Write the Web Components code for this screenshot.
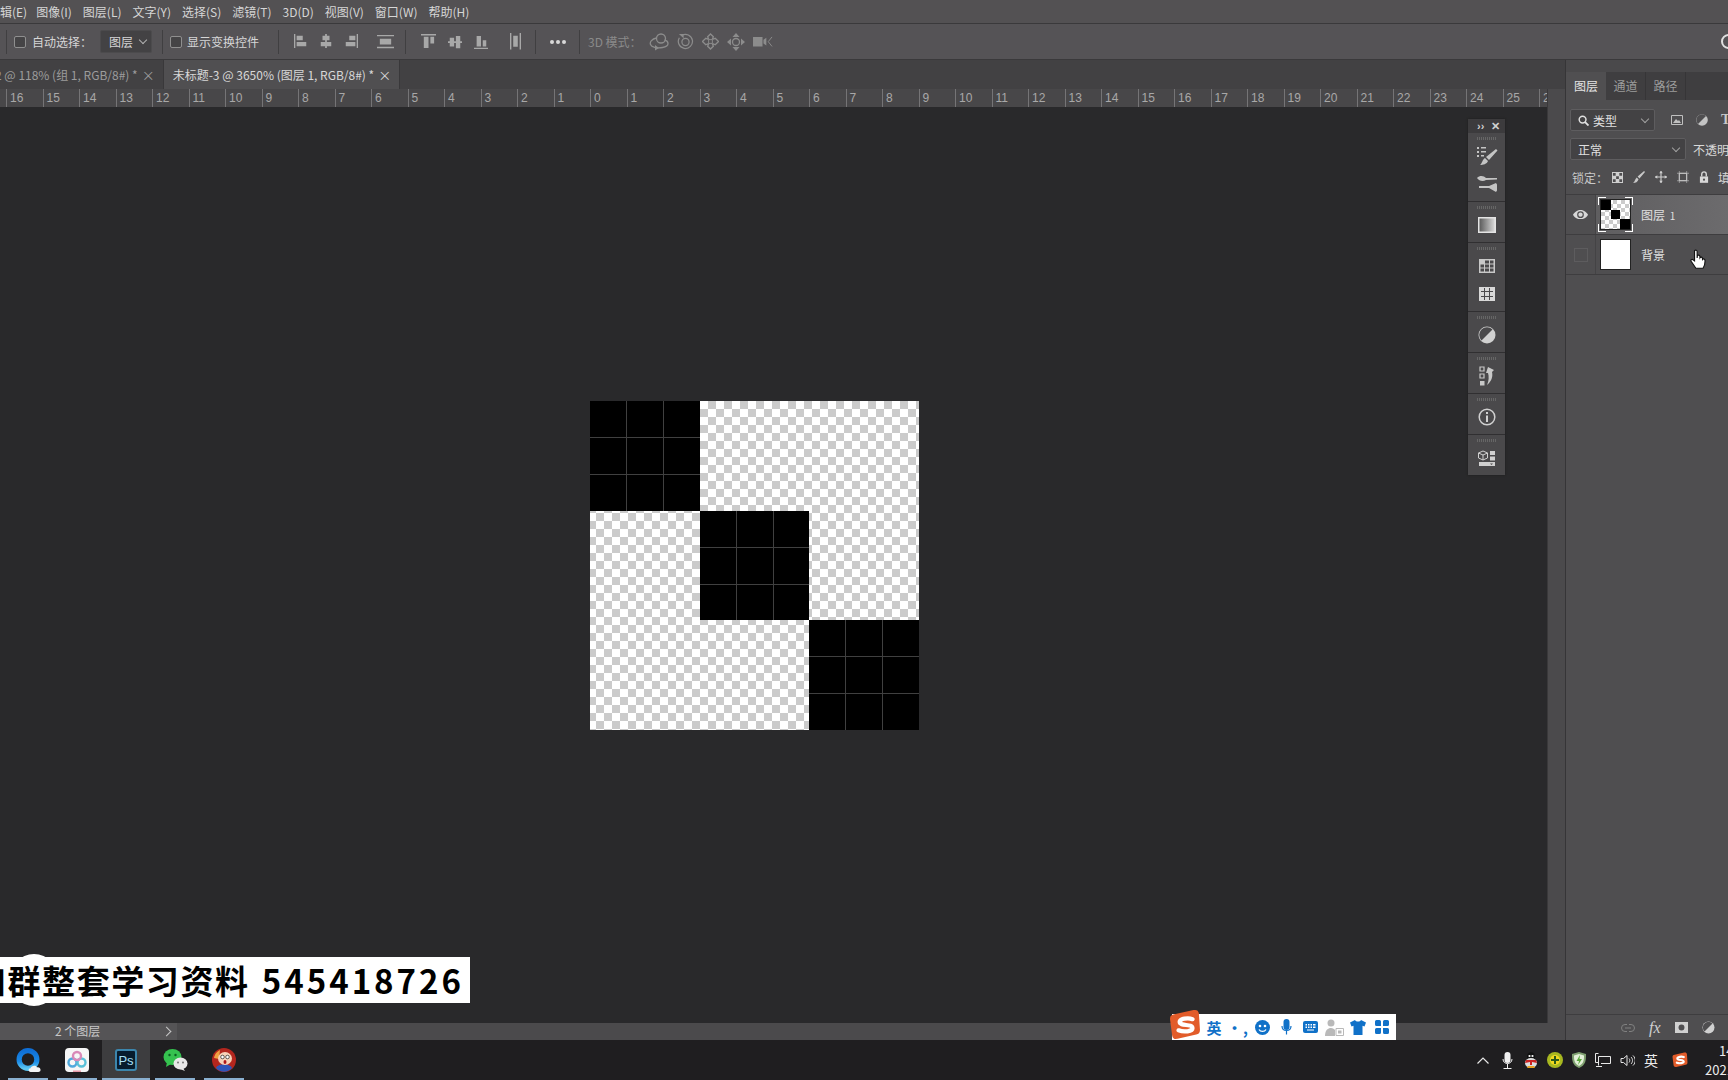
<!DOCTYPE html>
<html lang="zh">
<head>
<meta charset="utf-8">
<title>Photoshop</title>
<style>
  html, body { margin: 0; height: 100%; background: #29292b; overflow: hidden; }
  body { font: 12px "Noto Sans CJK SC", "Liberation Sans", sans-serif; color: #d0d0d0; }
</style>
</head>
<body>
<ps-app></ps-app>

<script>
// icon shapes, all on their own viewBox given as the first item
const SOGOU_S = '<path fill="#e25c2a" d="M5 5 23 1c3-.6 4.500.5 5 3l1 15c.2 3-1 4.500-3.500 5L8 28c-3 .5-4.500-.5-5-3L1 10c-.4-3 1-4.300 4-5z"/><path fill="none" stroke="#fff" stroke-width="4" stroke-linecap="round" d="M22 9.500c-4-1.500-12-.5-12 2.500 0 4.500 12 1.500 12 6 0 3-8 4-13 2"/>';
const ICONS = {
  alignL: ['16 16', '<path fill="#a8a8a8" d="M0 0h1.500v16H0zM3 2h7v5H3zM3 9h11v5H3z"/>'],
  alignC: ['16 16', '<path fill="#a8a8a8" d="M7 0h2v16H7zM4 2h8v5H4zM2 9h12v5H2z"/>'],
  alignR: ['16 16', '<path fill="#a8a8a8" d="M14.500 0H16v16h-1.500zM6 2h7v5H6zM2 9h11v5H2z"/>'],
  distV: ['18 16', '<path fill="#a8a8a8" d="M0 1h18v1.500H0zM0 13.500h18V15H0zM3 5h12v6H3z"/>'],
  alignT: ['16 16', '<path fill="#a8a8a8" d="M0 0h16v1.500H0zM3 3h5v12H3zM10 3h4v7h-4z"/>'],
  alignM: ['16 16', '<path fill="#a8a8a8" d="M0 7h16v2H0zM2 3h5v10H2zM9 1h5v14H9z"/>'],
  alignB: ['16 16', '<path fill="#a8a8a8" d="M0 14.500h16V16H0zM3 1h5v12H3zM10 6h4v7h-4z"/>'],
  distH: ['12 18', '<path fill="#a8a8a8" d="M0 0h1.500v18H0zM10.500 0H12v18h-1.500zM3.500 3h5v12h-5z"/>'],
  orbit: ['20 18', '<g fill="none" stroke="#8c8c8c" stroke-width="1.300"><circle cx="12" cy="5.500" r="4.500"/><path d="M7.500 5C3 6 .5 9 1.500 11.500c1 2.500 6 4 12 3 3-.5 5.500-2 5.500-4 0-1.500-1.500-3-3.500-3.500"/></g><path fill="#8c8c8c" d="M6 12l4 3-4 2.500z"/>'],
  roll: ['18 18', '<g fill="none" stroke="#8c8c8c" stroke-width="1.300"><path d="M5 2.500a7.500 7.500 0 1 1-2.500 2.500"/><circle cx="9" cy="9.500" r="3.800"/></g><path fill="#8c8c8c" d="M2 1h5v4.500z"/>'],
  pan: ['18 18', '<path fill="none" stroke="#8c8c8c" stroke-width="1.400" d="M9 1l3 3-1 2.500h1L14 5.500l3.500 3.500L14 12.500 12 11.500h-1l1 2.500-3 3-3-3 1-2.500H6L4 12.500.5 9 4 5.500 6 6.500h1L6 4z"/><path fill="none" stroke="#8c8c8c" d="M7 7h4v4H7z"/>'],
  slide: ['18 18', '<path fill="#8c8c8c" d="M9 0l3.500 4h-7zM9 18l-3.500-4h7zM0 9l4-3.500v7zM18 9l-4-3.500v7z"/><circle cx="9" cy="9" r="3.500" fill="none" stroke="#8c8c8c" stroke-width="1.300"/>'],
  video: ['21 14', '<path fill="#8c8c8c" d="M0 2h10v10H0zM11 5l3-2v8l-3-2z"/><path fill="none" stroke="#8c8c8c" d="M20 2l-4 5 4 5"/>'],
  brush: ['22 20', '<path fill="#c4c4c4" d="M1 1h2v2H1zM5 1h5v1.500H5zM1 5h2v2H1zM5 5h5v1.500H5zM1 9h2v2H1zM5 9h3v1.500H5zM20 3l1.500 1.500L13 14l-3-3zM9 12l3 3c-1 3-5 4-8 4 2-1 2-5 5-7z"/>'],
  brushSet: ['22 18', '<path fill="#c4c4c4" d="M1 3c3-3 7-2 9 0l11 0v1.500L10 5C7 7 3 6 1 3zM3 11h10l7-3 1 1.500v6L20 17l-7-4H3z"/>'],
  gradient: ['18 16', '<defs><linearGradient id="g"><stop offset="0" stop-color="#555"/><stop offset="1" stop-color="#ddd"/></linearGradient></defs><rect x=".75" y=".75" width="16.500" height="14.500" fill="url(#g)" stroke="#e4e4e4" stroke-width="1.500"/>'],
  table: ['16 14', '<path fill="#c8c8c8" d="M0 0h16v14H0z"/><path fill="#4a494b" d="M6 1.500h4v3H6zM11 1.500h3.500v3H11zM1.500 5.500h3.500v3H1.500zM6 5.500h4v3H6zM11 5.500h3.500v3H11zM1.500 9.500h3.500v3H1.500zM6 9.500h4v3H6zM11 9.500h3.500v3H11z"/>'],
  tableFill: ['16 14', '<path fill="#d8d8d8" d="M0 0h16v14H0z"/><path fill="none" stroke="#4a494b" d="M5.500 1v12M10.500 1v12M2 4.500h12M2 9.500h12"/>'],
  adjust: ['18 18', '<circle cx="9" cy="9" r="8.500" fill="#d0d0d0"/><path fill="#4a494b" d="M14.500 3.500 3.500 14.500A7 7 0 0 1 14.500 3.500z"/>'],
  history: ['16 20', '<path fill="none" stroke="#c8c8c8" stroke-width="1.200" d="M1 1h4v4H1zM1 8h4v4H1z"/><path fill="#c8c8c8" d="M1 15h4.500v4.500H1zM9 1l6 3-2 2c1 4 0 9-5 13 2-4 2-9 1-12l-2 0z"/>'],
  info: ['18 18', '<circle cx="9" cy="9" r="7.800" fill="none" stroke="#d0d0d0" stroke-width="1.500"/><path fill="#d0d0d0" d="M8 7.500h2V14H8zM8 4h2v2H8z"/>'],
  props: ['18 17', '<path fill="none" stroke="#d0d0d0" d="M5 1l4.500 2v5L5 10 .5 8V3zM.5 3 5 5l4.500-2M5 5v5"/><path fill="#d0d0d0" d="M12 1h5v4h-5zM12 6.500h5v4h-5zM1 12h16v4H1z"/><path fill="#4a494b" d="M12 13.500h3l-1.500 1.500z"/>'],
  eye: ['16 10', '<path fill="#d8d8d8" d="M8 0c4 0 7 3 8 5-1 2-4 5-8 5S1 7 0 5c1-2 4-5 8-5z"/><circle cx="8" cy="5" r="3.600" fill="#4f4e50"/><circle cx="8" cy="5" r="2.300" fill="#d8d8d8"/>'],
  search: ['12 12', '<circle cx="5" cy="5" r="3.700" fill="none" stroke="#e0e0e0" stroke-width="1.600"/><path stroke="#e0e0e0" stroke-width="2" d="M7.500 7.500 11.500 11.500"/>'],
  fImage: ['12 10', '<path fill="none" stroke="#c0c0c0" d="M.5.500h11v9H.5z"/><path fill="#c0c0c0" d="M2 8l3-4 2 2 1-1 2 3z"/>'],
  fAdjust: ['12 12', '<circle cx="6" cy="6" r="5.800" fill="#c4c4c4"/><path fill="#4f4e50" d="M10 2 2 10A5.500 5.500 0 0 1 10 2z"/>'],
  lockPx: ['12 12', '<path fill="#d0d0d0" d="M0 0h12v12H0z"/><path fill="#4f4e50" d="M1 1h3v3H1zM8 1h3v3H8zM4.500 4.500h3v3h-3zM1 8h3v3H1zM8 8h3v3H8z"/>'],
  lockBrush: ['13 13', '<path fill="#c8c8c8" d="M12 0l1 1-6 7-2-2zM4 7l2 2c-1 3-3 4-6 4 2-1 2-4 4-6z"/>'],
  lockMove: ['13 13', '<path fill="none" stroke="#d0d0d0" stroke-width="1.200" d="M6.500 0v13M0 6.500h13"/><path fill="#d0d0d0" d="M6.500 0l2 2.500h-4zM6.500 13l-2-2.500h4zM0 6.500l2.500-2v4zM13 6.500l-2.500-2v4z"/>'],
  lockArt: ['13 13', '<path fill="none" stroke="#d0d0d0" d="M2.500 2.500h8v8h-8z"/><path fill="#d0d0d0" d="M2 0h1v13H2zM10 0h1v13h-1zM0 2h13v1H0zM0 10h13v1H0z" opacity=".55"/>'],
  lock: ['11 13', '<path fill="none" stroke="#d8d8d8" stroke-width="1.500" d="M3 6V3.500a2.500 2.500 0 0 1 5 0V6"/><path fill="#d8d8d8" d="M1 6h9v7H1z"/><circle cx="5.500" cy="9.500" r="1.200" fill="#4f4e50"/>'],
  link: ['14 8', '<path fill="none" stroke="#808080" d="M6 .5H4a3.500 3.500 0 0 0 0 7h2M8 .5h2a3.500 3.500 0 0 1 0 7H8M4 4h6"/>'],
  mask: ['14 12', '<path fill="#d0d0d0" d="M0 0h14v12H0z"/><circle cx="7" cy="6" r="3.200" fill="#4f4e50"/>'],
  fill: ['13 13', '<circle cx="6.500" cy="6.500" r="6" fill="#d0d0d0"/><path fill="#4f4e50" d="M10.500 2.500l-8 8A5.500 5.500 0 0 1 10.500 2.500z"/>'],
  hand: ['15 18', '<path fill="#fff" stroke="#111" stroke-width="1" d="M4 1.500c1-1 2.300-.5 2.300.8V8l.2-2c.6-1 2-.8 2.200.3l.1 1.500c.5-.9 2-.8 2.200.4l.1 1c.6-.8 2-.5 2.100.6.200 2.500-.2 5-1.700 7.200H5.200L1 10.800c-.6-1 .6-2.200 1.700-1.300L4 10.500z"/>'],
  // taskbar
  qqb: ['24 24', '<defs><linearGradient id="q" x1="0" y1="0" x2="0" y2="1"><stop offset="0" stop-color="#0f6fd6"/><stop offset=".6" stop-color="#1a8ae6"/><stop offset="1" stop-color="#5cc6f2"/></linearGradient></defs><circle cx="11.500" cy="11" r="8.500" fill="none" stroke="url(#q)" stroke-width="5"/><path fill="#f4f4f4" d="M14 23c-2.500 0-2.500-3.500 0-3.500.5-2.500 5-3.500 6-1 2.500-.5 4 1.500 3.500 3.200-.3 1-1 1.300-2 1.300z"/>'],
  disk: ['24 24', '<rect width="24" height="24" rx="4" fill="#f6f6f6"/><g fill="none" stroke-width="2.400"><circle cx="7.500" cy="14.500" r="4" stroke="#4fa8dc"/><circle cx="16.500" cy="14.500" r="4" stroke="#58c0d8"/><circle cx="12" cy="8" r="4" stroke="#d989b8"/></g><path fill="#e89aa8" d="M8 22.500h8V24H8z"/>'],
  wechat: ['25 24', '<ellipse cx="9.500" cy="9" rx="9" ry="8" fill="#35c24f"/><path fill="#35c24f" d="M4 14l-1 5 5-3z"/><circle cx="6.500" cy="7" r="1.200" fill="#0b5f20"/><circle cx="12.500" cy="7" r="1.200" fill="#0b5f20"/><ellipse cx="17.500" cy="15.500" rx="7" ry="6" fill="#e8e8e8"/><path fill="#e8e8e8" d="M20 20l2 3-5-2z"/><circle cx="15" cy="14.500" r="1" fill="#777"/><circle cx="20" cy="14.500" r="1" fill="#777"/>'],
  avatar: ['24 24', '<circle cx="12" cy="12" r="12" fill="#b3261e"/><path fill="#2f55b8" d="M4 20c2-5 14-5 16 0-4 5-12 5-16 0z"/><path fill="#f0a040" d="M2 10c1-5 4-7 6-8l-1 9z"/><ellipse cx="13" cy="10.500" rx="7" ry="6.500" fill="#f7d2b8"/><circle cx="10.500" cy="9" r="1.800" fill="#fff" stroke="#222" stroke-width=".7"/><circle cx="15.500" cy="9" r="1.800" fill="#fff" stroke="#222" stroke-width=".7"/><ellipse cx="13" cy="14" rx="1.500" ry="2" fill="#b01818"/>'],
  // tray
  caret: ['12 7', '<path fill="none" stroke="#e8e8e8" stroke-width="1.200" d="M.5 6.500 6 1l5.500 5.500"/>'],
  micTray: ['11 17', '<rect x="2.500" width="6" height="11" rx="3" fill="#f0f0f0"/><path fill="none" stroke="#f0f0f0" d="M1 7c0 6 9 6 9 0M5.500 12v4M1.500 16.500h8"/>'],
  penguin: ['14 16', '<ellipse cx="7" cy="5" rx="4" ry="4.800" fill="#111"/><ellipse cx="7" cy="11" rx="6" ry="5" fill="#ddd"/><path fill="#c22" d="M2 8h10l1 3-5-1v3H6v-3L1 11z"/><circle cx="5.500" cy="4" r="1.100" fill="#fff"/><circle cx="8.500" cy="4" r="1.100" fill="#fff"/><path fill="#e9a020" d="M4 14h3v2H3zM7 14h3l1 2H7z"/>'],
  plusBall: ['16 16', '<circle cx="8" cy="8" r="8" fill="#a8b820"/><circle cx="8" cy="8" r="5" fill="#f0d820"/><path fill="#2b5a18" d="M7 4h2v3h3v2H9v3H7V9H4V7h3z"/>'],
  shield: ['14 16', '<path fill="#7fa070" d="M7 0l7 2c0 6 0 11-7 14C0 13 0 8 0 2z"/><path fill="#e3f0d8" d="M7 2l5 1.500c0 5-.5 8-5 10.500C2.500 11.500 2 8.500 2 3.500z"/><path fill="#58a83a" d="M8 3 4.500 9H7l-1 4 4-6H7.500z"/>'],
  network: ['16 15', '<path fill="none" stroke="#e8e8e8" d="M.5.500h3M.5.500v9h3M3.500 3.500h12v7H6M3.500 3.500v9M1 13.500h6"/>'],
  sound: ['15 13', '<path fill="none" stroke="#e8e8e8" d="M1 4.500h2.500L7 1.500v10l-3.500-3H1zM9 4.500c1 1 1 3 0 4M11 3c2 2 2 5 0 7M13 1.500c3 3 3 7 0 10"/>'],
  // sogou bar
  sogou: ['30 30', SOGOU_S],
  smile: ['15 15', '<circle cx="7.500" cy="7.500" r="7.500" fill="#1071c8"/><circle cx="5" cy="6" r="1.300" fill="#fff"/><circle cx="10" cy="6" r="1.300" fill="#fff"/><path fill="none" stroke="#fff" stroke-width="1.300" d="M4 9.500c1.500 2.500 5.500 2.500 7 0"/>'],
  micIme: ['11 16', '<rect x="2.500" width="6" height="11" rx="3" fill="#1071c8"/><path fill="none" stroke="#1071c8" stroke-width="1.200" d="M1 7c0 6 9 6 9 0M5.500 12v3.500"/>'],
  keyboard: ['15 12', '<rect width="15" height="12" rx="2" fill="#1071c8"/><path fill="#fff" d="M2.500 3H4v1.500H2.500zM5 3h1.500v1.500H5zM7.500 3H9v1.500H7.500zM10 3h2.500v1.500H10zM2.500 5.500H4V7H2.500zM5 5.500h1.500V7H5zM7.500 5.500H9V7H7.500zM10 5.500h2.500V7H10zM4 8.500h7v1H4z"/>'],
  person: ['19 17', '<circle cx="6" cy="4" r="3.500" fill="#b9b9b9"/><path fill="#b9b9b9" d="M0 17c0-6 3-8 6-8 2 0 3 1 4 2v6z"/><path fill="none" stroke="#b9b9b9" d="M11 9.500h7.500v7H11z"/><path fill="#b9b9b9" d="M13 11.500h3.500v3H13z"/>'],
  shirt: ['16 15', '<path fill="#1071c8" d="M5 0c1 2 5 2 6 0l5 2.500-1.500 4-2-.8V15H3.500V5.700l-2 .8L0 2.500z"/>'],
  apps: ['14 14', '<path fill="#1071c8" d="M1.500 0h3A1.500 1.500 0 0 1 6 1.500V6H1.500A1.500 1.500 0 0 1 0 4.500v-3A1.500 1.500 0 0 1 1.500 0zM8 1.500A1.500 1.500 0 0 1 9.500 0h3A1.500 1.500 0 0 1 14 1.500v3A1.500 1.500 0 0 1 12.500 6H8zM0 9.500A1.500 1.500 0 0 1 1.500 8H6v4.500A1.500 1.500 0 0 1 4.500 14h-3A1.500 1.500 0 0 1 0 12.500zM8 8h4.500A1.500 1.500 0 0 1 14 9.500v3a1.500 1.500 0 0 1-1.500 1.500h-3A1.500 1.500 0 0 1 8 12.500z"/>']
};

class PsIcon extends HTMLElement {
  constructor() {
    super();
    this.attachShadow({ mode: "open" });
    const [box, body] = ICONS[this.getAttribute('name')];
    const [w, h] = box.split(' ');
    const width = this.getAttribute('w') || w;
    const height = width * h / w;
    this.shadowRoot.innerHTML = `
      <style>:host { display: inline-flex; flex: none; } svg { display: block; }</style>
      <svg width="${width}" height="${height}" viewBox="0 0 ${box}">${body}</svg>`;
  }
}
customElements.define('ps-icon', PsIcon);

class PsMenubar extends HTMLElement {
  constructor() {
    super();
    this.attachShadow({ mode: "open" });
    const items = ['辑(E)', '图像(I)', '图层(L)', '文字(Y)', '选择(S)', '滤镜(T)', '3D(D)', '视图(V)', '窗口(W)', '帮助(H)'];
    this.shadowRoot.innerHTML = `
      <style>
        :host { display: flex; align-items: center; gap: 11px; height: 24px; box-sizing: border-box;
                background: #535153; border-bottom: 1px solid #3a393b; color: #d6d6d6; font-size: 12px; }
        span:first-of-type { margin-right: -2px; }
      </style>
      ${items.map(i => `<span>${i}</span>`).join('')}`;
  }
}
customElements.define('ps-menubar', PsMenubar);

class PsOptions extends HTMLElement {
  constructor() {
    super();
    this.attachShadow({ mode: "open" });
    this.shadowRoot.innerHTML = `
      <style>
        :host { display: flex; align-items: center; height: 36px; box-sizing: border-box; position: relative;
                background: #555356; border-bottom: 1px solid #3a393b; color: #d6d6d6; font-size: 12px; overflow: hidden; }
        .sep { width: 1px; height: 24px; background: #403f41; flex: none; }
        .check { width: 10px; height: 10px; border: 1px solid #8f8f8f; border-radius: 2px; background: #454446; flex: none; }
        .select { width: 52px; height: 23px; box-sizing: border-box; background: #434244; border: 1px solid #4c4b4d; border-radius: 2px;
                  display: flex; align-items: center; justify-content: space-between; padding: 0 5px 0 8px; flex: none; }
        .chev { width: 5px; height: 5px; border: solid #b0b0b0; border-width: 0 1px 1px 0; transform: rotate(45deg); margin-top: -3px; }
        .dim { color: #8a8a8a; }
        .dots { display: flex; gap: 2px; }
        .dots i { width: 4px; height: 4px; border-radius: 50%; background: #d8d8d8; }
        .group { display: flex; align-items: center; }
        .search { position: absolute; right: -8px; top: 10px; width: 11px; height: 11px; border: 2px solid #e0e0e0; border-radius: 50%; }
      </style>
      <span class="sep" style="margin-left:6px"></span>
      <span class="check" style="margin-left:7px"></span>
      <span style="margin-left:6px;width:68px;flex:none">自动选择：</span>
      <div class="select"><span>图层</span><span class="chev"></span></div>
      <span class="sep" style="margin-left:10px"></span>
      <span class="check" style="margin-left:7px"></span>
      <span style="margin-left:5px;width:91px;flex:none">显示变换控件</span>
      <span class="sep"></span>
      <div class="group" style="margin-left:15px;gap:11px">
        <ps-icon name="alignL" w="14"></ps-icon><ps-icon name="alignC" w="14"></ps-icon><ps-icon name="alignR" w="14"></ps-icon>
        <ps-icon name="distV" w="17" style="margin-left:8px"></ps-icon>
      </div>
      <span class="sep" style="margin-left:11px"></span>
      <div class="group" style="margin-left:15px;gap:12px">
        <ps-icon name="alignT" w="15"></ps-icon><ps-icon name="alignM" w="14"></ps-icon><ps-icon name="alignB" w="14"></ps-icon>
        <ps-icon name="distH" w="11" style="margin-left:10px"></ps-icon>
      </div>
      <span class="sep" style="margin-left:14px"></span>
      <div class="dots" style="margin-left:14px"><i></i><i></i><i></i></div>
      <span class="sep" style="margin-left:13px"></span>
      <span class="dim" style="margin-left:8px;width:61px;flex:none">3D 模式：</span>
      <div class="group" style="gap:8px">
        <ps-icon name="orbit" w="20"></ps-icon><ps-icon name="roll" w="17"></ps-icon><ps-icon name="pan" w="17"></ps-icon>
        <ps-icon name="slide" w="18"></ps-icon><ps-icon name="video" w="20"></ps-icon>
      </div>
      <span class="search"></span>`;
  }
}
customElements.define('ps-options', PsOptions);

class PsTab extends HTMLElement {
  constructor() {
    super();
    this.attachShadow({ mode: "open" });
    this.shadowRoot.innerHTML = `
      <style>
        :host { display: flex; align-items: center; height: 100%; box-sizing: border-box; color: #9c9c9c; white-space: nowrap;
                border-right: 1px solid #39383a; margin-left: -5px; }
        :host([active]) { background: #504f51; color: #d8d8d8; padding-left: 9px; margin-left: 0; }
        .x { margin: 0 8px 0 4px; font-size: 13px; color: inherit; }
      </style>
      <slot></slot><span class="x">×</span>`;
  }
}
customElements.define('ps-tab', PsTab);

class PsTabbar extends HTMLElement {
  constructor() {
    super();
    this.attachShadow({ mode: "open" });
    this.shadowRoot.innerHTML = `
      <style>:host { display: flex; height: 29px; background: #424143; font-size: 12px; }</style>
      <slot></slot>`;
  }
}
customElements.define('ps-tabbar', PsTabbar);

class PsRuler extends HTMLElement {
  constructor() {
    super();
    this.attachShadow({ mode: "open" });
    // zero sits at x=590, one unit is 36.5px
    let ticks = '';
    for (let n = -16; n <= 26; n++) ticks += `<span class="t">${Math.abs(n)}</span>`;
    this.shadowRoot.innerHTML = `
      <style>
        :host { display: flex; height: 18px; padding-left: 6px; background: #484749; overflow: hidden;
                font: 12px "Liberation Sans", sans-serif; color: #a8a8a8; }
        .t { flex: 0 0 36.5px; box-sizing: border-box; border-left: 1px solid #757476; padding-left: 3px; line-height: 19px; }
      </style>
      ${ticks}`;
  }
}
customElements.define('ps-ruler', PsRuler);

class PsArtwork extends HTMLElement {
  constructor() {
    super();
    this.attachShadow({ mode: "open" });
    const cell = i => `<div class="${i % 4 === 0 ? 'ink' : ''}"></div>`;
    this.shadowRoot.innerHTML = `
      <style>
        :host { display: grid; grid-template: repeat(3, 1fr) / repeat(3, 1fr); width: 329px; height: 329px; flex: none;
                background: repeating-conic-gradient(#cbcbcb 0 25%, #fff 0 50%) -2px 0 / 16px 16px; }
        .ink { background-color: #000;
               background-image: linear-gradient(90deg, transparent 36px, #404040 36px, #404040 37px, transparent 37px, transparent 73px, #404040 73px, #404040 74px, transparent 74px),
                                 linear-gradient(transparent 36px, #404040 36px, #404040 37px, transparent 37px, transparent 73px, #404040 73px, #404040 74px, transparent 74px); }
      </style>
      ${Array.from({ length: 9 }, (_, i) => cell(i)).join('')}`;
  }
}
customElements.define('ps-artwork', PsArtwork);

class PsDock extends HTMLElement {
  constructor() {
    super();
    this.attachShadow({ mode: "open" });
    const groups = [
      [['brush', 22], ['brushSet', 22]],
      [['gradient', 18]],
      [['table', 16], ['tableFill', 16]],
      [['adjust', 18]],
      [['history', 16]],
      [['info', 18]],
      [['props', 18]]
    ];
    this.shadowRoot.innerHTML = `
      <style>
        :host { position: absolute; left: 1468px; top: 12px; width: 37px; background: #4a494b; display: block; box-shadow: 0 0 2px #1c1c1c; }
        .head { height: 14px; background: #3c3b3d; display: flex; align-items: center; justify-content: space-between; padding: 0 5px 0 9px;
                color: #d0d0d0; font: bold 11px "Liberation Sans", sans-serif; line-height: 14px; }
        section { border-bottom: 1px solid #302f31; display: flex; flex-direction: column; align-items: center; padding: 14px 0 8px; gap: 10px; position: relative; }
        section:last-child { border: 0; }
        section::before { content: ""; position: absolute; top: 4px; left: 9px; right: 9px; height: 3px;
                          background: repeating-linear-gradient(90deg, #666 0 1px, transparent 1px 2px); }
        .cell { height: 18px; display: flex; align-items: center; justify-content: center; }
      </style>
      <div class="head"><span>››</span><span>✕</span></div>
      ${groups.map(g => `<section>${g.map(([n, w]) => `<div class="cell"><ps-icon name="${n}" w="${w}"></ps-icon></div>`).join('')}</section>`).join('')}`;
  }
}
customElements.define('ps-dock', PsDock);

class PsCanvas extends HTMLElement {
  constructor() {
    super();
    this.attachShadow({ mode: "open" });
    // top padding puts the artwork at y=401, canvas starts at y=107
    this.shadowRoot.innerHTML = `
      <style>
        :host { display: block; position: relative; flex: 1; min-height: 0; background: #29292b; padding: 294px 0 0 590px; box-sizing: border-box; }
      </style>
      <slot></slot>`;
  }
}
customElements.define('ps-canvas', PsCanvas);

class PsStatus extends HTMLElement {
  constructor() {
    super();
    this.attachShadow({ mode: "open" });
    this.shadowRoot.innerHTML = `
      <style>
        :host { display: flex; align-items: center; height: 17px; background: #4b4a4c; color: #c8c8c8; font-size: 12px; }
        .info { width: 177px; height: 100%; box-sizing: border-box; background: #555456; padding: 0 0 2px 55px; display: flex; align-items: center; flex: none; position: relative; }
        .arrow { position: absolute; left: 163px; top: 5px; width: 6px; height: 6px; border: solid #c8c8c8; border-width: 1px 1px 0 0; transform: rotate(45deg); }
      </style>
      <div class="info"><span>2 个图层</span><span class="arrow"></span></div>`;
  }
}
customElements.define('ps-status', PsStatus);

class PsSelect extends HTMLElement {
  constructor() {
    super();
    this.attachShadow({ mode: "open" });
    this.shadowRoot.innerHTML = `
      <style>
        :host { display: flex; align-items: center; justify-content: space-between; box-sizing: border-box; height: 22px; flex: none;
                background: #434244; border: 1px solid #5e5d5f; border-radius: 2px; padding: 0 6px 0 7px; color: #e0e0e0; gap: 3px; }
        .chev { width: 5px; height: 5px; border: solid #a0a0a0; border-width: 0 1px 1px 0; transform: rotate(45deg); margin-top: -3px; }
        .left { display: flex; align-items: center; gap: 4px; }
      </style>
      <div class="left"><slot></slot></div><span class="chev"></span>`;
  }
}
customElements.define('ps-select', PsSelect);

class PsLayer extends HTMLElement {
  constructor() {
    super();
    this.attachShadow({ mode: "open" });
    const active = this.hasAttribute('active');
    this.shadowRoot.innerHTML = `
      <style>
        :host { display: flex; align-items: center; height: 40px; box-sizing: border-box; border-bottom: 1px solid #3e3d3f; color: #e0e0e0; }
        .vis { width: 30px; flex: none; display: flex; justify-content: center; align-items: center; height: 100%; box-sizing: border-box; border-right: 1px solid #444345; }
        .box { width: 12px; height: 12px; border: 1px solid #5d5c5e; }
        .main { flex: 1; height: 100%; display: flex; align-items: center; gap: 10px; padding-left: 4px; position: relative; }
        :host([active]) .main { background: linear-gradient(90deg, #5f5e60, #6c6b6d); }
        .thumb { width: 31px; height: 31px; box-sizing: border-box; border: 1px solid #222; flex: none; position: relative; }
        .art { background-color: #fff; background-image: repeating-conic-gradient(#cbcbcb 0 25%, #fff 0 50%); background-size: 8px 8px; display: grid; grid-template: repeat(3, 1fr) / repeat(3, 1fr); }
        .art i { background: #000; }
        .white { background: #fff; }
        .corners { position: absolute; left: 0; top: 0; width: 35px; height: 35px; pointer-events: none;
                   --c: #fff; background:
                     linear-gradient(var(--c),var(--c)) 0 0/8px 1px no-repeat, linear-gradient(var(--c),var(--c)) 0 0/1px 8px no-repeat,
                     linear-gradient(var(--c),var(--c)) 100% 0/8px 1px no-repeat, linear-gradient(var(--c),var(--c)) 100% 0/1px 8px no-repeat,
                     linear-gradient(var(--c),var(--c)) 0 100%/8px 1px no-repeat, linear-gradient(var(--c),var(--c)) 0 100%/1px 8px no-repeat,
                     linear-gradient(var(--c),var(--c)) 100% 100%/8px 1px no-repeat, linear-gradient(var(--c),var(--c)) 100% 100%/1px 8px no-repeat;
                   transform: translate(-3px, -3px); }
        ::slotted(ps-icon) { position: absolute; left: 94px; top: 14px; }
      </style>
      <div class="vis">${active ? '<ps-icon name="eye" w="15"></ps-icon>' : '<span class="box"></span>'}</div>
      <div class="main">
        ${active
          ? `<div class="thumb art"><i></i><b></b><b></b><b></b><i></i><b></b><b></b><b></b><i></i><span class="corners"></span></div>`
          : `<div class="thumb white"></div>`}
        <span><slot name="label"></slot></span>
        <slot name="extra"></slot>
      </div>`;
  }
}
customElements.define('ps-layer', PsLayer);

class PsLayers extends HTMLElement {
  constructor() {
    super();
    this.attachShadow({ mode: "open" });
    this.shadowRoot.innerHTML = `
      <style>
        :host { display: flex; flex-direction: column; flex: 1; min-width: 0; background: #4a494b; border-left: 1px solid #363537; font-size: 12px; color: #d8d8d8; overflow: hidden; }
        .tabs { margin-top: 12px; height: 28px; display: flex; background: #3f3e40; flex: none; }
        .tab { width: 40px; display: flex; align-items: center; justify-content: center; color: #9c9c9c; border-right: 1px solid #363537; box-sizing: border-box; padding-bottom: 2px; }
        .tab.on { background: #504f51; color: #e4e4e4; border: 0; }
        .body { flex: 1; background: #4f4e50; display: flex; flex-direction: column; min-height: 0; }
        .row { display: flex; align-items: center; padding-left: 4px; gap: 7px; flex: none; white-space: nowrap; }
        .r1 { margin-top: 9px; height: 22px; }
        .r2 { margin-top: 7px; height: 22px; }
        .r3 { height: 35px; border-bottom: 1px solid #3e3d3f; gap: 9px; padding-left: 6px; box-sizing: border-box; }
        .icons { display: flex; gap: 13px; align-items: center; }
        .list { flex: 1; }
        .foot { height: 25px; border-top: 1px solid #3e3d3f; display: flex; align-items: center; padding-left: 55px; gap: 14px; flex: none; font: italic 16px "Liberation Serif", serif; color: #d0d0d0; }
        .t { font-family: "Liberation Serif", serif; font-weight: bold; font-size: 14px; color: #c8c8c8; }
      </style>
      <div class="tabs"><div class="tab on">图层</div><div class="tab">通道</div><div class="tab">路径</div></div>
      <div class="body">
        <div class="row r1">
          <ps-select style="width:85px"><ps-icon name="search" w="11"></ps-icon><span>类型</span></ps-select>
          <div class="icons" style="margin-left:9px;gap:13px"><ps-icon name="fImage" w="12"></ps-icon><ps-icon name="fAdjust" w="12"></ps-icon><span class="t">T</span></div>
        </div>
        <div class="row r2"><ps-select style="width:116px"><span>正常</span></ps-select><span>不透明</span></div>
        <div class="row r3">
          <span style="color:#c8c8c8">锁定：</span>
          <div class="icons" style="margin-left:-5px;gap:10px">
            <ps-icon name="lockPx" w="11"></ps-icon><ps-icon name="lockBrush" w="12"></ps-icon><ps-icon name="lockMove" w="12"></ps-icon><ps-icon name="lockArt" w="12"></ps-icon><ps-icon name="lock" w="10"></ps-icon>
          </div>
          <span>填</span>
        </div>
        <div class="list"><slot></slot></div>
        <div class="foot">
          <ps-icon name="link" w="14"></ps-icon><span>fx</span><ps-icon name="mask" w="13"></ps-icon><ps-icon name="fill" w="13"></ps-icon>
        </div>
      </div>`;
  }
}
customElements.define('ps-layers', PsLayers);

class WinTaskbar extends HTMLElement {
  constructor() {
    super();
    this.attachShadow({ mode: "open" });
    const apps = [['qqb', 25], ['disk', 24], [null, 21], ['wechat', 25], ['avatar', 24]];
    this.shadowRoot.innerHTML = `
      <style>
        :host { display: flex; align-items: stretch; justify-content: space-between; height: 40px; background: #1f1e20; color: #ececec; overflow: hidden; }
        .apps { display: flex; gap: 9px; padding-left: 8px; align-items: stretch; }
        .app { width: 40px; display: flex; align-items: center; justify-content: center; position: relative; }
        .app::after { content: ""; position: absolute; left: 0; right: 0; bottom: 0; height: 2px; background: #8ab0d0; }
        .app.on { width: 48px; margin: 0 -4px; background: #3d3d3f; }
        .ps { width: 22px; height: 22px; box-sizing: border-box; border-radius: 3px; border: 2px solid #3c86ad; background: #071c2d; color: #a8e0f8;
              font: 13px "Liberation Sans", sans-serif; display: flex; align-items: center; justify-content: center; }
        .tray { display: flex; align-items: center; }
        .slot { width: 24px; display: flex; justify-content: center; flex: none; }
        .clock { width: 23px; margin-left: 13px; align-self: stretch; display: flex; flex-direction: column; justify-content: center; line-height: 19px; font-size: 13px; overflow: hidden; white-space: nowrap; }
        .clock span:first-child { margin-left: 14px; }
      </style>
      <div class="apps">
        ${apps.map(([n, w]) => n
          ? `<div class="app"><ps-icon name="${n}" w="${w}"></ps-icon></div>`
          : `<div class="app on"><span class="ps">Ps</span></div>`).join('')}
      </div>
      <div class="tray">
        <div class="slot"><ps-icon name="caret" w="12"></ps-icon></div>
        <div class="slot"><ps-icon name="micTray" w="11"></ps-icon></div>
        <div class="slot"><ps-icon name="penguin" w="14"></ps-icon></div>
        <div class="slot"><ps-icon name="plusBall" w="16"></ps-icon></div>
        <div class="slot"><ps-icon name="shield" w="14"></ps-icon></div>
        <div class="slot"><ps-icon name="network" w="16"></ps-icon></div>
        <div class="slot"><ps-icon name="sound" w="15"></ps-icon></div>
        <div class="slot" style="font-size:14px">英</div>
        <div class="slot" style="margin-left:5px"><ps-icon name="sogou" w="16"></ps-icon></div>
        <div class="clock"><span>14</span><span>2021</span></div>
      </div>`;
  }
}
customElements.define('win-taskbar', WinTaskbar);

class ImeBar extends HTMLElement {
  constructor() {
    super();
    this.attachShadow({ mode: "open" });
    this.shadowRoot.innerHTML = `
      <style>
        :host { position: absolute; left: 1172px; top: 1014px; width: 224px; height: 26px; background: #fff; display: flex; align-items: center; color: #1071c8; font-size: 15px; font-weight: 700; }
        .logo { position: absolute; left: -3px; top: -5px; }
        .items { display: flex; align-items: center; margin-left: 30px; }
        .i { width: 24px; display: flex; justify-content: center; align-items: center; flex: none; }
      </style>
      <ps-icon class="logo" name="sogou" w="32"></ps-icon>
      <div class="items">
        <span class="i">英</span>
        <span class="i" style="font-size:15px;letter-spacing:1px">·,</span>
        <span class="i"><ps-icon name="smile" w="15"></ps-icon></span>
        <span class="i"><ps-icon name="micIme" w="11"></ps-icon></span>
        <span class="i"><ps-icon name="keyboard" w="15"></ps-icon></span>
        <span class="i"><ps-icon name="person" w="19"></ps-icon></span>
        <span class="i"><ps-icon name="shirt" w="16"></ps-icon></span>
        <span class="i"><ps-icon name="apps" w="14"></ps-icon></span>
      </div>`;
  }
}
customElements.define('ime-bar', ImeBar);

class VideoCaption extends HTMLElement {
  constructor() {
    super();
    this.attachShadow({ mode: "open" });
    this.shadowRoot.innerHTML = `
      <style>
        :host { position: absolute; left: 0; top: 957px; width: 470px; height: 46px; background: #fff; color: #000;
                display: flex; justify-content: flex-end; align-items: center; padding-right: 6px; box-sizing: border-box; white-space: nowrap;
                font: 700 33px/46px "Noto Sans CJK SC", "Noto Sans", sans-serif; letter-spacing: 1.6px; }
        :host::before { content: ""; position: absolute; left: 9px; top: -3px; width: 50px; height: 52px; border-radius: 50%; background: #fff; }
        span { position: relative; }
        ::slotted(b) { letter-spacing: 3px; font-weight: inherit; margin-left: 3px; }
      </style>
      <span><slot></slot></span>`;
  }
}
customElements.define('video-caption', VideoCaption);

class PsApp extends HTMLElement {
  constructor() {
    super();
    this.attachShadow({ mode: "open" });
    this.shadowRoot.innerHTML = `
      <style>
        :host { display: flex; flex-direction: column; width: 1728px; height: 1080px; position: relative; overflow: hidden; }
        .work { flex: 1; display: flex; min-height: 0; }
        .doc { width: 1565px; flex: none; display: flex; flex-direction: column; }
        .view { flex: 1; display: flex; min-height: 0; }
        .left { flex: 1; display: flex; flex-direction: column; min-width: 0; }
        .vscroll { width: 18px; background: #4b4a4c; flex: none; border-left: 1px solid #3a393b; box-sizing: border-box; }
      </style>
      <ps-menubar></ps-menubar>
      <ps-options></ps-options>
      <div class="work">
        <div class="doc">
          <ps-tabbar>
            <ps-tab>2 @ 118% (组 1, RGB/8#) *</ps-tab>
            <ps-tab active>未标题-3 @ 3650% (图层 1, RGB/8#) *</ps-tab>
          </ps-tabbar>
          <div class="view">
            <div class="left">
              <ps-ruler></ps-ruler>
              <ps-canvas><ps-artwork></ps-artwork><ps-dock></ps-dock></ps-canvas>
            </div>
            <div class="vscroll"></div>
          </div>
          <ps-status></ps-status>
        </div>
        <ps-layers>
          <ps-layer active><span slot="label">图层 <span style="font-size:10px;margin-left:2px">1</span></span></ps-layer>
          <ps-layer><span slot="label">背景</span><ps-icon slot="extra" name="hand" w="17"></ps-icon></ps-layer>
        </ps-layers>
      </div>
      <win-taskbar></win-taskbar>
      <video-caption>加群整套学习资料 <b>545418726</b></video-caption>
      <ime-bar></ime-bar>`;
  }
}
customElements.define('ps-app', PsApp);
</script>
</body>
</html>
